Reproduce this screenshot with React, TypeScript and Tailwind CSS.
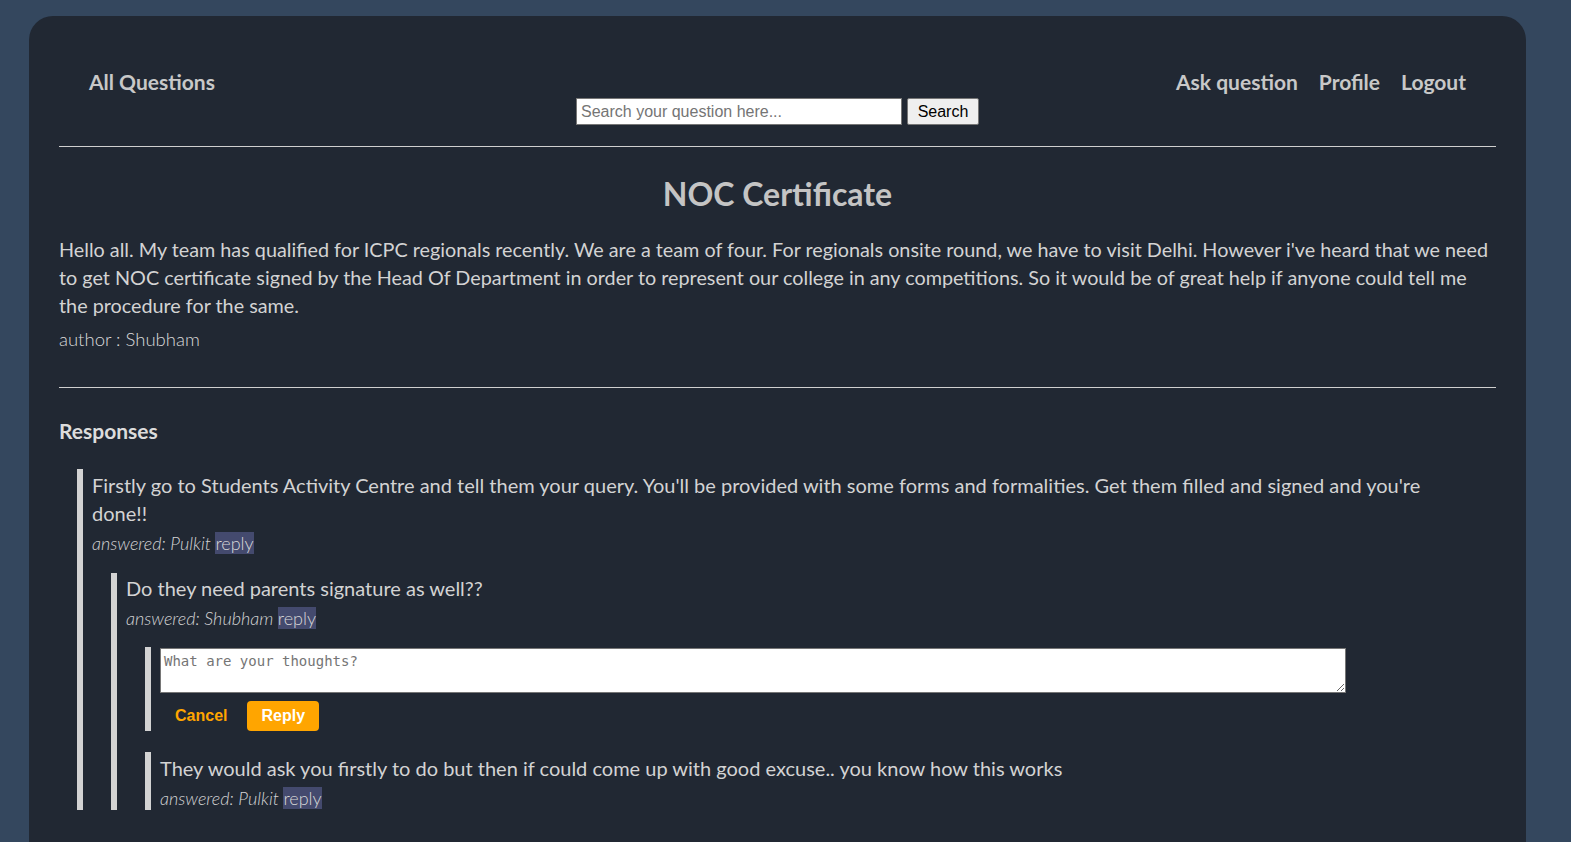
import React from "react";

const sans = "font-['Lato','Open_Sans',sans-serif]";

function Reply() {
  return <span className="bg-[#444a6e] text-[#d8d8d8] not-italic font-light">reply</span>;
}

function Answered({ name }: { name: string }) {
  return (
    <div className="text-[18px] leading-[24px] mt-[4px] text-[#d3d3d3] italic font-light">
      answered: {name} <Reply />
    </div>
  );
}

export default function App() {
  return (
    <div className={`min-h-screen bg-[#34475e] pt-[16px] ${sans}`}>
      <div className="ml-[29px] w-[1497px] rounded-t-[24px] bg-[#212833] px-[30px] pb-[60px] text-[#d3d3d3]">
        <header className="grid grid-cols-[1fr_auto_1fr] px-[30px] pt-[52px] pb-[21px] border-b border-[#cfcfcf]">
          <div className="text-[21px] font-bold leading-[28px] text-[#c8c8c8]">All Questions</div>
          <form className="flex gap-[5px] mt-[30px] items-start" onSubmit={(e) => e.preventDefault()}>
            <input
              placeholder="Search your question here..."
              className="w-[326px] h-[27px] bg-white border border-[#767676] px-[4px] text-[16px] text-black placeholder-[#757575] font-['Liberation_Sans',Arial,sans-serif] outline-none"
            />
            <button className="h-[27px] w-[72px] bg-[#efefef] border border-[#767676] rounded-[2px] text-[16px] text-black font-['Liberation_Sans',Arial,sans-serif]">
              Search
            </button>
          </form>
          <nav className="flex justify-end gap-[21px] text-[21px] font-bold leading-[28px] text-[#c8c8c8]">
            <span>Ask question</span>
            <span>Profile</span>
            <span>Logout</span>
          </nav>
        </header>

        <section className="border-b border-[#cfcfcf] pb-[36px]">
          <h1 className="mt-[29px] text-center text-[32px] leading-[36px] font-bold text-[#c4c4c4]">NOC Certificate</h1>
          <p className="mt-[23px] text-[19.8px] leading-[28px] text-[#d3d3d3]">
            Hello all. My team has qualified for ICPC regionals recently. We are a team of four. For regionals onsite round, we have to visit Delhi. However i've heard that we need to get NOC certificate signed by the Head Of Department in order to represent our college in any competitions. So it would be of great help if anyone could tell me the procedure for the same.
          </p>
          <div className="mt-[8px] text-[18.5px] leading-[24px] font-light text-[#dadada]">author : Shubham</div>
        </section>

        <h2 className="mt-[29px] text-[21px] leading-[28px] font-bold text-[#dcdcdc]">Responses</h2>

        <div className="mt-[24px] ml-[18px] border-l-[6px] border-[#d3d3d3] pl-[9px] pt-[2px]">
          <div className="text-[20px] leading-[28px] pr-[60px]">
            Firstly go to Students Activity Centre and tell them your query. You'll be provided with some forms and formalities. Get them filled and signed and you're done!!
          </div>
          <Answered name="Pulkit" />

          <div className="mt-[18px] ml-[19px] border-l-[6px] border-[#d3d3d3] pl-[9px] pt-[1px]">
            <div className="text-[20px] leading-[28px]">Do they need parents signature as well??</div>
            <Answered name="Shubham" />

            <div className="mt-[17px] ml-[19px] border-l-[6px] border-[#d3d3d3] pl-[9px] pt-[1px]">
              <textarea
                placeholder="What are your thoughts?"
                className="block w-[1186px] h-[45px] bg-white border border-[#767676] px-[3px] py-[2px] text-[14px] text-black placeholder-[#757575] font-['DejaVu_Sans_Mono',monospace] outline-none"
              />
              <div className="mt-[8px] flex gap-[5px]">
                <button className="h-[30px] px-[15px] text-[16px] font-bold text-[#ffa500] font-['Liberation_Sans',Arial,sans-serif]">
                  Cancel
                </button>
                <button className="h-[30px] px-[14px] rounded-[4px] bg-[#ffa500] text-[16px] font-bold text-white font-['Liberation_Sans',Arial,sans-serif]">
                  Reply
                </button>
              </div>
            </div>

            <div className="mt-[21px] ml-[19px] border-l-[6px] border-[#d3d3d3] pl-[9px] pt-[2px]">
              <div className="text-[20px] leading-[28px]">
                They would ask you firstly to do but then if could come up with good excuse.. you know how this works
              </div>
              <Answered name="Pulkit" />
            </div>
          </div>
        </div>
      </div>
    </div>
  );
}
